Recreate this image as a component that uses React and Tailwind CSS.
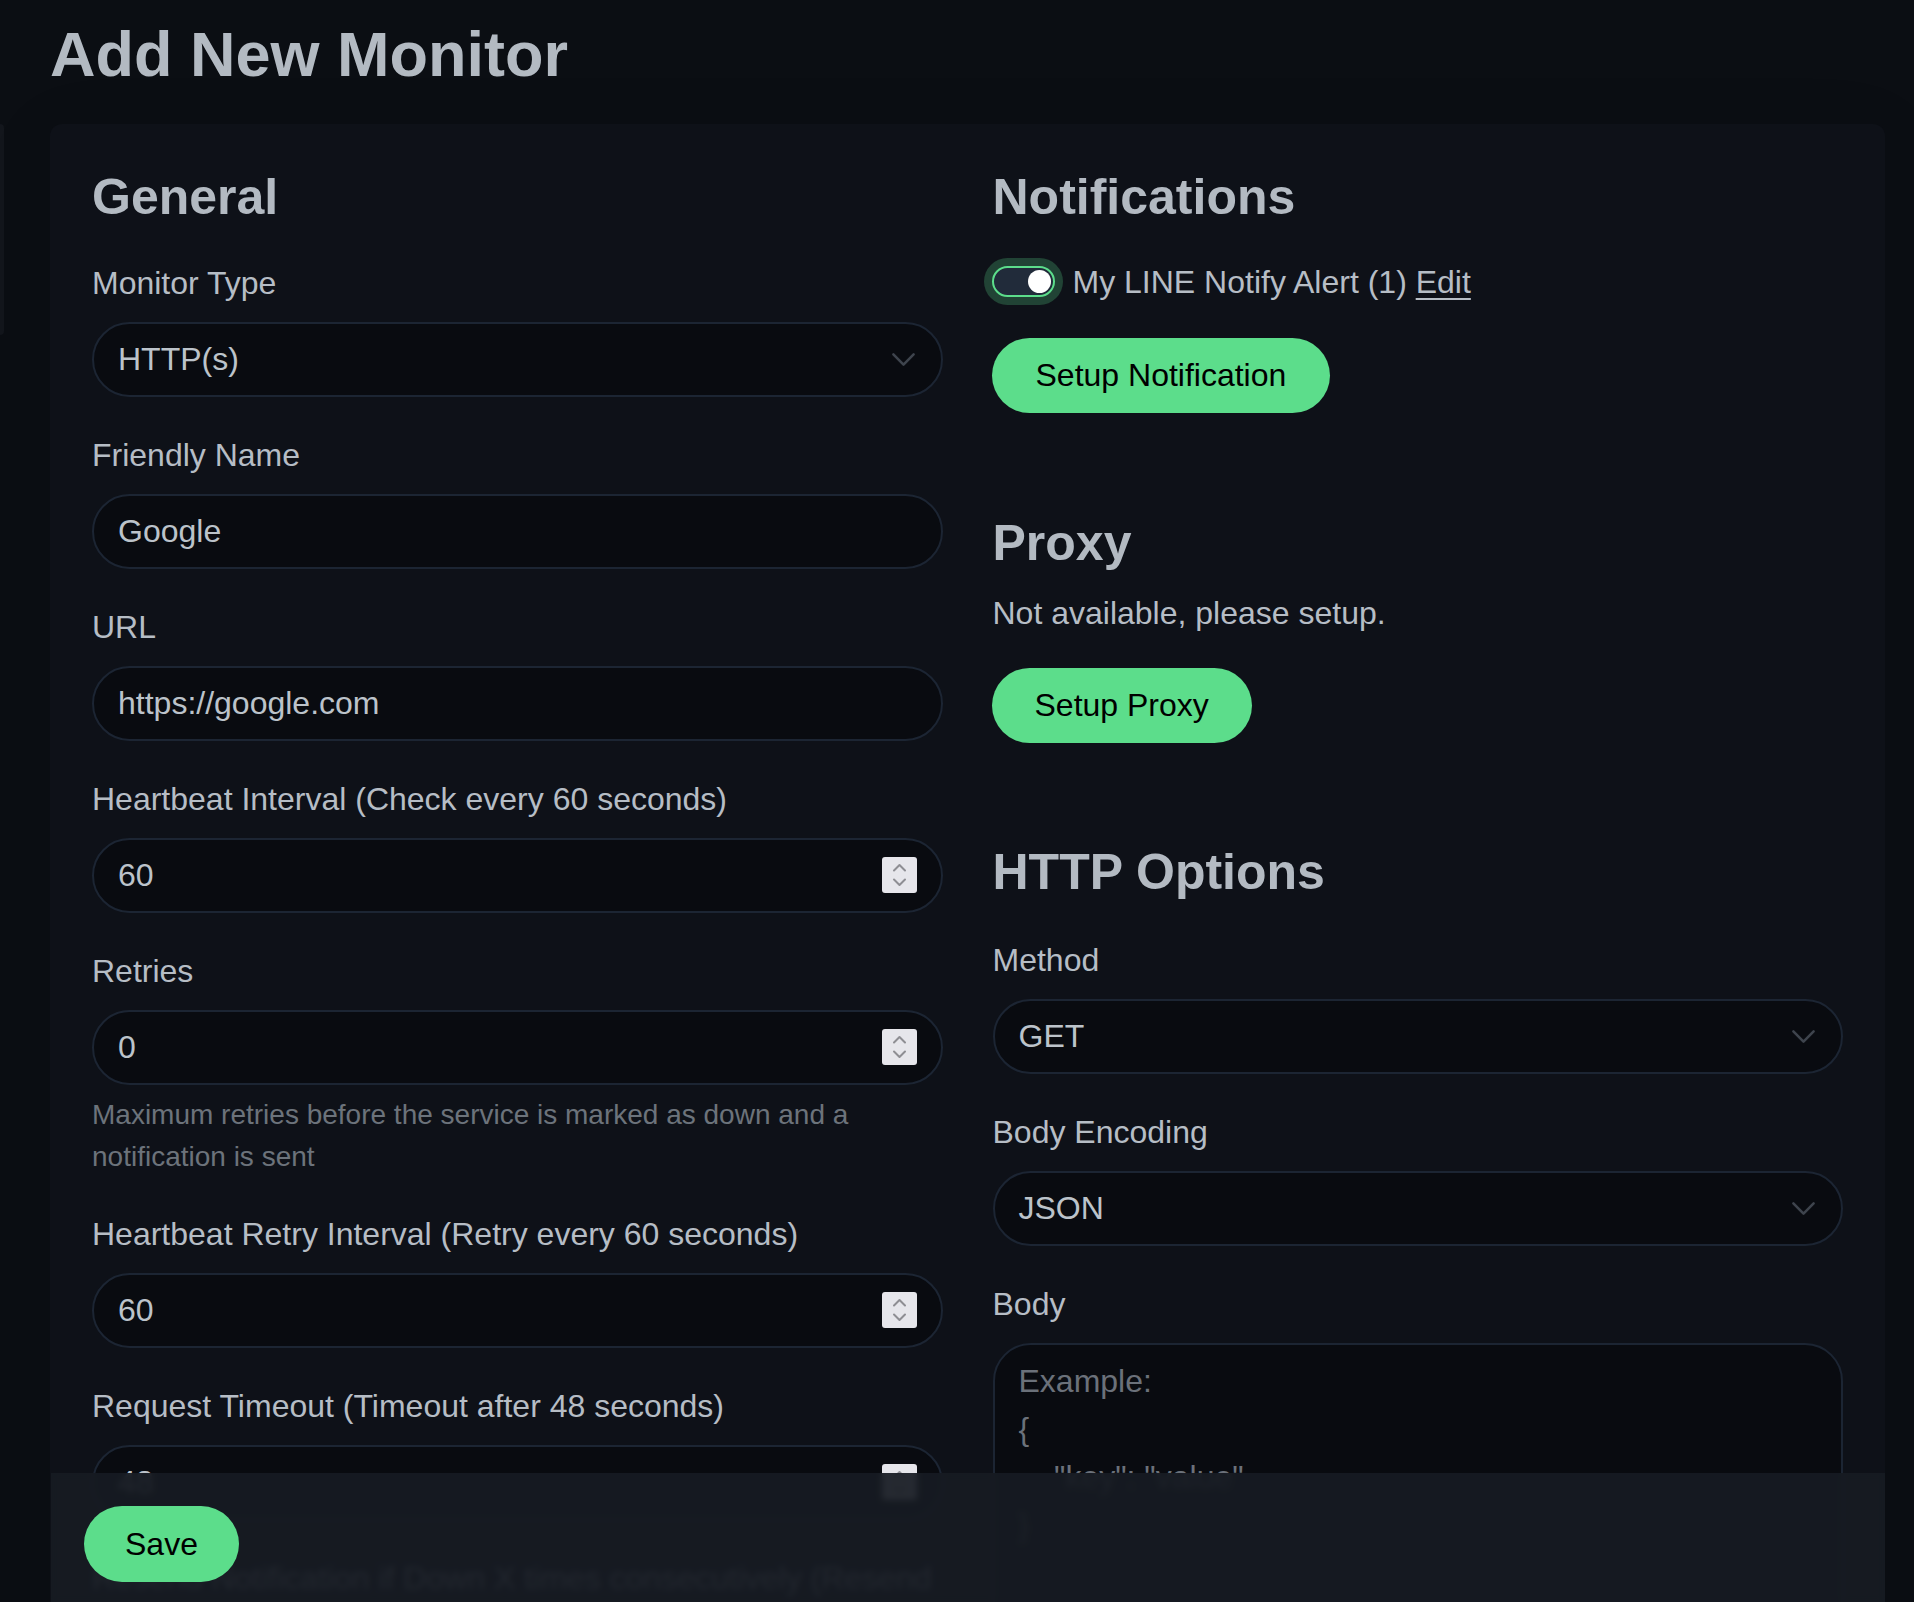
import React from 'react';

const font = "font-['Liberation_Sans',Arial,Helvetica,sans-serif]";

const Chevron = () => (
  <svg width="27" height="27" viewBox="0 0 16 16" fill="none" className="shrink-0">
    <path d="M2 5l6 6 6-6" stroke="#3e444d" strokeWidth="1.5" strokeLinecap="round" strokeLinejoin="round" />
  </svg>
);

const Spinner = () => (
  <div className="flex h-[36px] w-[35px] shrink-0 flex-col items-center justify-center gap-[6px] rounded-[3px] bg-[#e6e6eb]">
    <svg width="15" height="9" viewBox="0 0 15 9" fill="none">
      <path d="M2 7.5l5.5-5.5 5.5 5.5" stroke="#8e8e93" strokeWidth="2" strokeLinecap="round" strokeLinejoin="round" />
    </svg>
    <svg width="15" height="9" viewBox="0 0 15 9" fill="none">
      <path d="M2 1.5l5.5 5.5 5.5-5.5" stroke="#8e8e93" strokeWidth="2" strokeLinecap="round" strokeLinejoin="round" />
    </svg>
  </div>
);

const Box = ({ children, right }) => (
  <div className="flex h-[75px] items-center justify-between rounded-full border-2 border-[#1c2533] bg-[#090b10] pl-[24px] pr-[24px] text-[32px] leading-[48px] text-[#bcc3ca]">
    <span>{children}</span>
    {right}
  </div>
);

const Field = ({ label, children, className = 'mb-[34px]' }) => (
  <div className={className}>
    <div className="mb-[15px] text-[32px] leading-[48px]">{label}</div>
    {children}
  </div>
);

const Heading = ({ children, className = '' }) => (
  <h2 className={`text-[50px] font-bold leading-[60px] text-[#b3bac2] ${className}`}>{children}</h2>
);

const GreenButton = ({ children, className = '' }) => (
  <button className={`inline-flex h-[75px] items-center rounded-full bg-[#5cdd8b] px-[43px] text-[32px] leading-[48px] text-black ${className}`}>
    {children}
  </button>
);

export default function App() {
  return (
    <div className={`relative flex h-[1602px] w-full overflow-hidden bg-[#0b0e13] ${font}`}>
      {/* edge of the monitor list panel */}
      <div className="w-[4px] shrink-0">
        <div className="mt-[124px] h-[211px] rounded-r-[4px] bg-[#13161c]" />
      </div>

      <div className="flex-1 pl-[46px] pr-[29px]">
        <h1 className="pt-[17px] text-[63px] font-bold leading-[1.2] text-[#b3bac2]">Add New Monitor</h1>

        <div className="mt-[31px] rounded-[12px] bg-[#0e1118] px-[42px] pt-[43px] text-[#b6bdc5] shadow-[0_15px_70px_rgba(0,0,0,0.1)]">
          <div className="grid grid-cols-2 gap-x-[50px]">
            {/* General */}
            <div>
              <Heading className="mb-[32px]">General</Heading>
              <Field label="Monitor Type">
                <Box right={<Chevron />}>HTTP(s)</Box>
              </Field>
              <Field label="Friendly Name">
                <Box>Google</Box>
              </Field>
              <Field label="URL">
                <Box>https://google.com</Box>
              </Field>
              <Field label="Heartbeat Interval (Check every 60 seconds)">
                <Box right={<Spinner />}>60</Box>
              </Field>
              <Field label="Retries" className="">
                <Box right={<Spinner />}>0</Box>
                <p className="mb-[32px] mt-[9px] text-[28px] leading-[42px] text-[#6c737b]">
                  Maximum retries before the service is marked as down and a notification is sent
                </p>
              </Field>
              <Field label="Heartbeat Retry Interval (Retry every 60 seconds)">
                <Box right={<Spinner />}>60</Box>
              </Field>
              <Field label="Request Timeout (Timeout after 48 seconds)">
                <Box right={<Spinner />}>48</Box>
              </Field>
              <div className="text-[32px] leading-[48px]">
                Resend Notification if Down X times consecutively (Resend disabled)
              </div>
            </div>

            {/* Notifications / Proxy / HTTP Options */}
            <div>
              <Heading>Notifications</Heading>
              <div className="mt-[31px] flex h-[48px] items-center text-[32px] leading-[48px]">
                <div className="-ml-[1px] flex h-[31px] w-[63px] items-center justify-end rounded-full border-2 border-[#5cdd8b] bg-[#212b3a] pr-[2px] shadow-[0_0_0_8px_rgba(92,221,139,0.25)]">
                  <div className="h-[23px] w-[23px] rounded-full bg-white" />
                </div>
                <span className="ml-[18px]">
                  My LINE Notify Alert (1){' '}
                  <span className="underline decoration-[2px] underline-offset-[5px]">Edit</span>
                </span>
              </div>
              <GreenButton className="-ml-[1px] mt-[32px] px-[44px]">Setup Notification</GreenButton>

              <Heading className="mt-[100px]">Proxy</Heading>
              <p className="mt-[16px] text-[32px] leading-[48px]">Not available, please setup.</p>
              <GreenButton className="-ml-[1px] mt-[31px]">Setup Proxy</GreenButton>

              <Heading className="mb-[34px] mt-[99px]">HTTP Options</Heading>
              <Field label="Method">
                <Box right={<Chevron />}>GET</Box>
              </Field>
              <Field label="Body Encoding">
                <Box right={<Chevron />}>JSON</Box>
              </Field>
              <Field label="Body">
                <div className="h-[320px] whitespace-pre rounded-[38px] border-2 border-[#1c2533] bg-[#090b10] px-[24px] pt-[12px] text-[32px] leading-[48px] text-[#6b717a]">
                  {'Example:\n{\n    "key": "value"\n}'}
                </div>
              </Field>
            </div>
          </div>
        </div>
      </div>

      {/* fixed save bar */}
      <div className="absolute bottom-0 left-[51px] right-[29px] h-[129px] bg-[#171b22]/[0.93] pl-[33px] pt-[33px] backdrop-blur-[3px]">
        <button className="flex h-[76px] items-center rounded-full bg-[#5cdd8b] px-[41px] text-[32px] leading-[48px] text-black">
          Save
        </button>
      </div>
    </div>
  );
}
